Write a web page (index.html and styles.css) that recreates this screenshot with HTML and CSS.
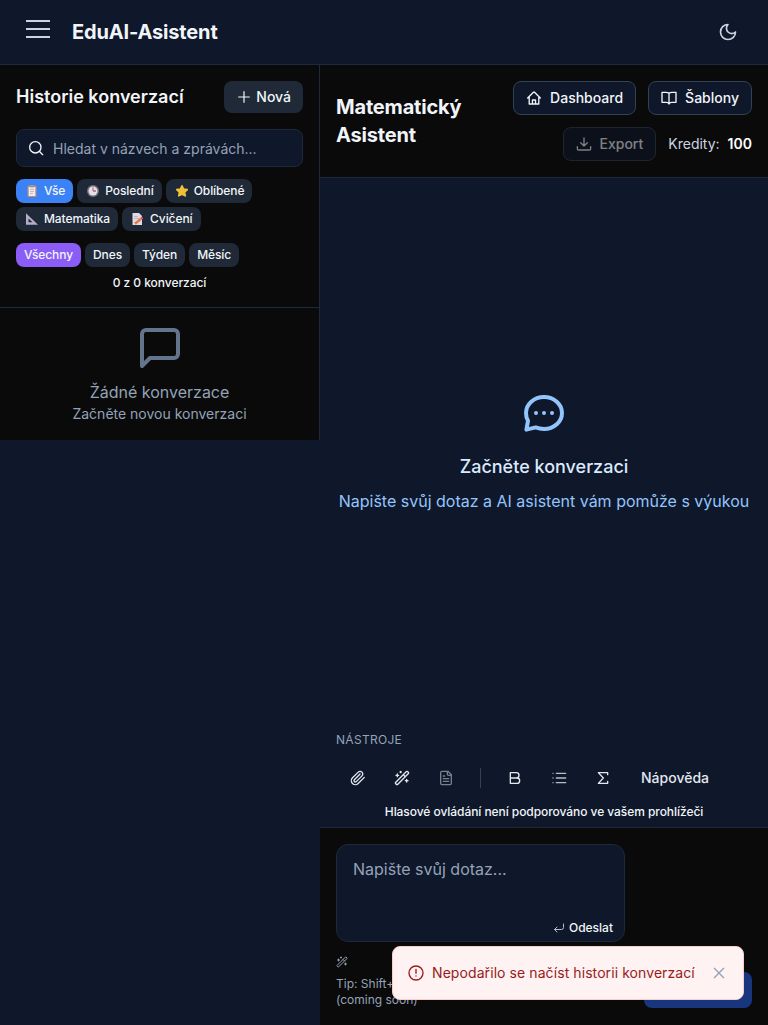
FILE: index.html
```html
<!DOCTYPE html>
<html lang="cs">
<head>
<meta charset="utf-8">
<title>EduAI-Asistent</title>
<link rel="stylesheet" href="styles.css">
</head>
<body>
<svg class="defs" width="0" height="0">
  <symbol id="wand" viewBox="0 0 24 24"><path d="m21.64 3.64-1.28-1.28a1.21 1.21 0 0 0-1.72 0L2.36 18.64a1.21 1.21 0 0 0 0 1.72l1.28 1.28a1.2 1.2 0 0 0 1.72 0L21.64 5.36a1.2 1.2 0 0 0 0-1.72M14 7l3 3M5 6v4M19 14v4M10 2v2M7 8H3M21 16h-4M11 3H9"/></symbol>
</svg>
<header class="topbar">
  <button class="menu" aria-label="Menu"><span></span><span></span><span></span></button>
  <h1 class="brand">EduAI-Asistent</h1>
  <svg class="icon moon" viewBox="0 0 24 24"><path d="M12 3a6 6 0 0 0 9 9 9 9 0 1 1-9-9Z"/></svg>
</header>
<main class="layout">
  <aside class="sidebar">
    <div class="filters">
      <div class="history-head">
        <h2>Historie konverzací</h2>
        <button class="new-btn"><svg class="icon s16 thin" viewBox="0 0 24 24"><path d="M4 12h16M12 4v16"/></svg>Nová</button>
      </div>
      <div class="search"><svg class="icon s16" viewBox="0 0 24 24"><circle cx="11" cy="11" r="8.500"/><path d="m22 22-5-5"/></svg><span>Hledat v názvech a zprávách...</span></div>
      <div class="chips">
        <button class="chip blue"><svg class="emoji" viewBox="0 0 12 12"><rect x="1.500" y=".5" width="9" height="11.500" rx="1" fill="#c58b6d"/><path fill="#eeeaf2" d="M2.700 2h6.600v9H2.700z"/><path fill="#9a98a8" d="M4 .2h4v2.300H4z"/><path stroke="#aaa6ba" stroke-width=".7" d="M4 4.500h4M4 6.500h4M4 8.500h3"/></svg>Vše</button>
        <button class="chip"><svg class="emoji" viewBox="0 0 12 12"><circle cx="6" cy="6" r="6" fill="#74717a"/><circle cx="6" cy="6" r="4.500" fill="#e5e0e7"/><path fill="none" stroke="#554b58" d="M6 6h3"/><path stroke="#d94a66" d="M6 2.300V6"/></svg>Poslední</button>
        <button class="chip"><svg class="emoji" viewBox="0 0 12 12"><path fill="#edc13a" stroke="#edc13a" stroke-width="1.600" stroke-linejoin="round" d="m6 .8 1.600 3.300 3.700.5-2.700 2.600.7 3.700L6 9.200l-3.300 1.700.7-3.700L.7 4.600l3.700-.5z"/></svg>Oblíbené</button>
        <button class="chip"><svg class="emoji" viewBox="0 0 12 12"><path fill="#b5aec6" fill-rule="evenodd" d="M0 .3 12 11.700H0ZM2.500 5.500v3.700h4Z"/></svg>Matematika</button>
        <button class="chip"><svg class="emoji" viewBox="0 0 12 12"><path fill="#dedbe5" d="M.5 0H7l3 3v9H.5Z"/><path stroke="#aaa6b8" stroke-width=".7" d="M2 3.500h4M2 5.500h5"/><path stroke="#e77b43" stroke-width="2.500" d="m3 10.700 6-5"/><path stroke="#df527d" stroke-width="2.500" d="m9 5.700 1.500-1.200"/></svg>Cvičení</button>
      </div>
      <div class="chips periods">
        <button class="chip violet">Všechny</button>
        <button class="chip">Dnes</button>
        <button class="chip">Týden</button>
        <button class="chip">Měsíc</button>
      </div>
      <p class="count">0 z 0 konverzací</p>
    </div>
    <div class="no-history">
      <svg class="icon s48" viewBox="0 0 24 24"><path d="M21 15a2 2 0 0 1-2 2H7l-4 4V5a2 2 0 0 1 2-2h14a2 2 0 0 1 2 2z"/></svg>
      <p>Žádné konverzace</p>
      <small>Začněte novou konverzaci</small>
    </div>
  </aside>
  <section class="chat">
    <div class="chat-head">
      <h2>Matematický Asistent</h2>
      <div class="actions">
        <button class="outline"><svg class="icon s16" viewBox="0 0 24 24"><path d="m2.500 12 8.700-8.700a1.130 1.130 0 0 1 1.600 0L21.500 12M4.800 10v11h14.400V10M9.700 21v-6h4.600v6"/></svg>Dashboard</button>
        <button class="outline"><svg class="icon s16" viewBox="0 0 24 24"><path d="M12 5v16M12 5c-1-1-2.500-1.500-4.500-1.500h-6v15H8c2 0 3.200.8 4 2.500.8-1.700 2-2.500 4-2.500h6.500v-15h-6C14.500 3.500 13 4 12 5Z"/></svg>Šablony</button>
        <button class="outline disabled"><svg class="icon s16" viewBox="0 0 24 24"><path d="M2 16v3a2 2 0 0 0 2 2h16a2 2 0 0 0 2-2v-3M7 10l5 5 5-5M12 15V3"/></svg>Export</button>
        <div class="credits">Kredity: <strong>100</strong></div>
      </div>
    </div>
    <div class="messages">
      <svg class="icon s48" viewBox="0 0 24 24"><path d="M3.200 20.300 4 15.900C3.300 14.700 3 13.400 3 12c0-4.400 4-8 9-8s9 3.600 9 8-4 8-9 8c-1.500 0-2.900-.3-4.200-.8Z"/><path class="dots" d="M8 12h.01M12 12h.01M16 12h.01"/></svg>
      <h3>Začněte konverzaci</h3>
      <p>Napište svůj dotaz a AI asistent vám pomůže s výukou</p>
    </div>
    <div class="tools">
      <p class="tools-label">Nástroje</p>
      <div class="toolbar">
        <button><svg class="icon s16" viewBox="0 0 24 24"><path d="m21.440 11.050-9.190 9.190a6 6 0 0 1-8.490-8.490l8.570-8.570A4 4 0 1 1 18 8.840l-8.590 8.570a2 2 0 0 1-2.830-2.830l8.490-8.480"/></svg></button>
        <button><svg class="icon s16"><use href="#wand"/></svg></button>
        <button class="dim"><svg class="icon s16" viewBox="0 0 24 24"><path d="M15 2H6a2 2 0 0 0-2 2v16a2 2 0 0 0 2 2h12a2 2 0 0 0 2-2V7ZM14 2v4a2 2 0 0 0 2 2h4M10 9H8M16 13H8M16 17H8"/></svg></button>
        <i class="divider"></i>
        <button><svg class="icon s16" viewBox="0 0 24 24"><path d="M5 4h9a4 4 0 0 1 0 8H5ZM5 12h10a4 4 0 0 1 0 8H5Z"/></svg></button>
        <button><svg class="icon s16 list" viewBox="0 0 24 24"><path d="M8 5h14M8 12h14M8 19h14M3 5h.01M3 12h.01M3 19h.01"/></svg></button>
        <button><svg class="icon s16" viewBox="0 0 24 24"><path d="M19 7V4H5l7.500 8L5 20h14v-3"/></svg></button>
        <span class="help">Nápověda</span>
      </div>
      <p class="voice">Hlasové ovládání není podporováno ve vašem prohlížeči</p>
    </div>
    <div class="composer">
      <div class="input">
        <span class="placeholder">Napište svůj dotaz...</span>
        <span class="submit-hint"><svg class="icon s12" viewBox="0 0 24 24"><path d="m8 10-5 5 5 5M3 15h14a4 4 0 0 0 4-4V4"/></svg>Odeslat</span>
      </div>
      <div class="composer-foot">
        <div class="tip"><svg class="icon s12"><use href="#wand"/></svg><p>Tip: Shift+Enter<br>(coming soon)</p></div>
        <button class="send" aria-label="Odeslat"></button>
      </div>
    </div>
  </section>
</main>
<div class="toast" role="alert">
  <svg class="icon s16" viewBox="0 0 24 24"><circle cx="12" cy="12" r="10.500"/><path d="M12 6.500v6M12 16.500h.01"/></svg>
  <span>Nepodařilo se načíst historii konverzací</span>
  <svg class="icon s16 close" viewBox="0 0 24 24"><path d="m5 5 14 14M19 5 5 19"/></svg>
</div>
</body>
</html>
```

FILE: styles.css
```css
* { box-sizing: border-box; }
body { margin: 0; height: 1025px; overflow: hidden; background: #0f172a; color: #f1f5f9; font: 400 14px/20px Inter, sans-serif; }
h1, h2, h3, p { margin: 0; }
button { font: inherit; color: inherit; border: 0; background: none; padding: 0; margin: 0; }
.defs { position: absolute; }
.icon { display: block; flex: none; fill: none; stroke: currentColor; stroke-width: 2; stroke-linecap: round; stroke-linejoin: round; }
.thin { stroke-width: 1.800; }
.s12 { width: 12px; height: 12px; }
.s16 { width: 16px; height: 16px; }
.s48 { width: 48px; height: 48px; }

.topbar { display: flex; align-items: center; height: 65px; padding: 0 30px 0 26px; border-bottom: 1px solid #1e293b; }
.menu { width: 24px; height: 24px; display: flex; flex-direction: column; gap: 6px; margin-right: 22px; }
.menu span { height: 2px; background: #cbd5e1; }
.brand { font-size: 20px; line-height: 28px; font-weight: 650; letter-spacing: -.16px; }
.moon { width: 20px; height: 20px; margin-left: auto; color: #cbd5e1; }

.layout { display: flex; align-items: flex-start; height: 960px; }
.sidebar { width: 320px; background: #0a0a0a; border-right: 1px solid #1e293b; }
.filters { padding: 16px; border-bottom: 1px solid #1e293b; }
.history-head { display: flex; justify-content: space-between; align-items: center; margin-bottom: 16px; }
.history-head h2 { font-size: 18px; line-height: 28px; font-weight: 600; }
.new-btn { display: flex; align-items: center; gap: 4px; height: 32px; padding: 0 12px; background: #1f2937; border-radius: 8px; font-weight: 500; }
.search { display: flex; align-items: center; gap: 9px; height: 38px; padding: 0 11px; border: 1px solid #1e293b; border-radius: 8px; background: #0f172a; margin-bottom: 12px; }
.search span { color: #94a3b8; padding-top: 2px; }
.chips { display: flex; flex-wrap: wrap; gap: 4px; }
.chip { display: flex; align-items: center; height: 24px; padding: 0 8px; border-radius: 8px; background: #1f2937; font-size: 12px; line-height: 16px; font-weight: 500; letter-spacing: -.08px; }
.blue { background: #3b82f6; }
.violet { background: #8b5cf6; }
.emoji { width: 12px; height: 12px; margin: 0 6px 0 2px; }
.periods { margin-top: 12px; }
.count { font-size: 12px; line-height: 16px; text-align: center; margin-top: 8px; font-weight: 500; letter-spacing: -.05px; }
.no-history { display: flex; flex-direction: column; align-items: center; padding: 16px; color: #94a3b8; }
.no-history .icon { color: #64748b; margin-bottom: 8px; }
.no-history p { font-size: 16px; line-height: 24px; }
.no-history small { font-size: 14px; }

.chat { flex: 1; min-width: 0; height: 960px; display: flex; flex-direction: column; }
.chat-head { height: 113px; display: flex; align-items: center; padding: 16px; background: #0a0a0a; border-bottom: 1px solid #1e293b; }
.chat-head h2 { width: 140px; font-size: 20px; line-height: 28px; font-weight: 650; letter-spacing: -.18px; }
.actions { flex: 1; display: flex; flex-wrap: wrap; justify-content: flex-end; gap: 12px; }
.outline { height: 34px; display: flex; align-items: center; gap: 8px; padding: 0 12px; border: 1px solid #334155; border-radius: 8px; background: #0f172a; font-weight: 550; }
.disabled { opacity: .5; }
.credits { display: flex; align-items: center; gap: 8px; color: #cbd5e1; }
.credits strong { color: #fff; font-weight: 600; }
.messages { flex: 1; display: flex; flex-direction: column; align-items: center; justify-content: center; color: #93c5fd; }
.messages .dots { stroke-width: 2; }
.messages h3 { margin: 16px 0 8px; font-size: 18px; line-height: 28px; font-weight: 500; color: #dbeafe; }
.messages p { font-size: 16px; line-height: 24px; white-space: nowrap; }
.tools { height: 104px; padding: 8px 16px 0; border-bottom: 1px solid #1e293b; }
.tools-label { font-size: 12px; line-height: 16px; color: #94a3b8; text-transform: uppercase; letter-spacing: .3px; }
.toolbar { display: flex; align-items: center; height: 44px; margin-top: 8px; color: #e2e8f0; }
.toolbar button { width: 44px; display: flex; justify-content: center; }
.toolbar .dim { opacity: .5; }
.toolbar .list { opacity: .8; }
.divider { width: 1px; height: 20px; background: #334155; margin: 0 12px; }
.help { font-weight: 500; margin-left: 16px; }
.voice { font-size: 12px; line-height: 16px; text-align: center; margin-top: 4px; font-weight: 500; letter-spacing: -.06px; }
.composer { height: 197px; background: #0a0a0a; padding: 16px; }
.input { width: 289px; height: 98px; display: flex; flex-direction: column; justify-content: space-between; padding: 12px 11px 5px 16px; border: 1px solid #1e293b; border-radius: 12px; background: #0f172a; }
.placeholder { font-size: 16px; line-height: 24px; color: #94a3b8; }
.submit-hint { display: flex; justify-content: flex-end; align-items: center; gap: 4px; font-size: 12px; line-height: 16px; font-weight: 500; }
.submit-hint .icon { opacity: .75; }
.composer-foot { display: flex; justify-content: space-between; align-items: flex-end; height: 66px; color: #94a3b8; }
.tip { font-size: 12px; line-height: 16px; }
.tip .icon { margin-bottom: 8px; }
.send { width: 108px; height: 36px; border-radius: 8px; background: #18367e; }

.toast { position: fixed; left: 392px; top: 946px; width: 352px; height: 54px; display: flex; align-items: center; gap: 8px; padding: 0 16px 0 15px; border: 1px solid #fecaca; border-radius: 8px; background: #fef2f2; color: #991b1b; white-space: nowrap; letter-spacing: .08px; }
.close { margin-left: auto; color: #94a3b8; }
```
